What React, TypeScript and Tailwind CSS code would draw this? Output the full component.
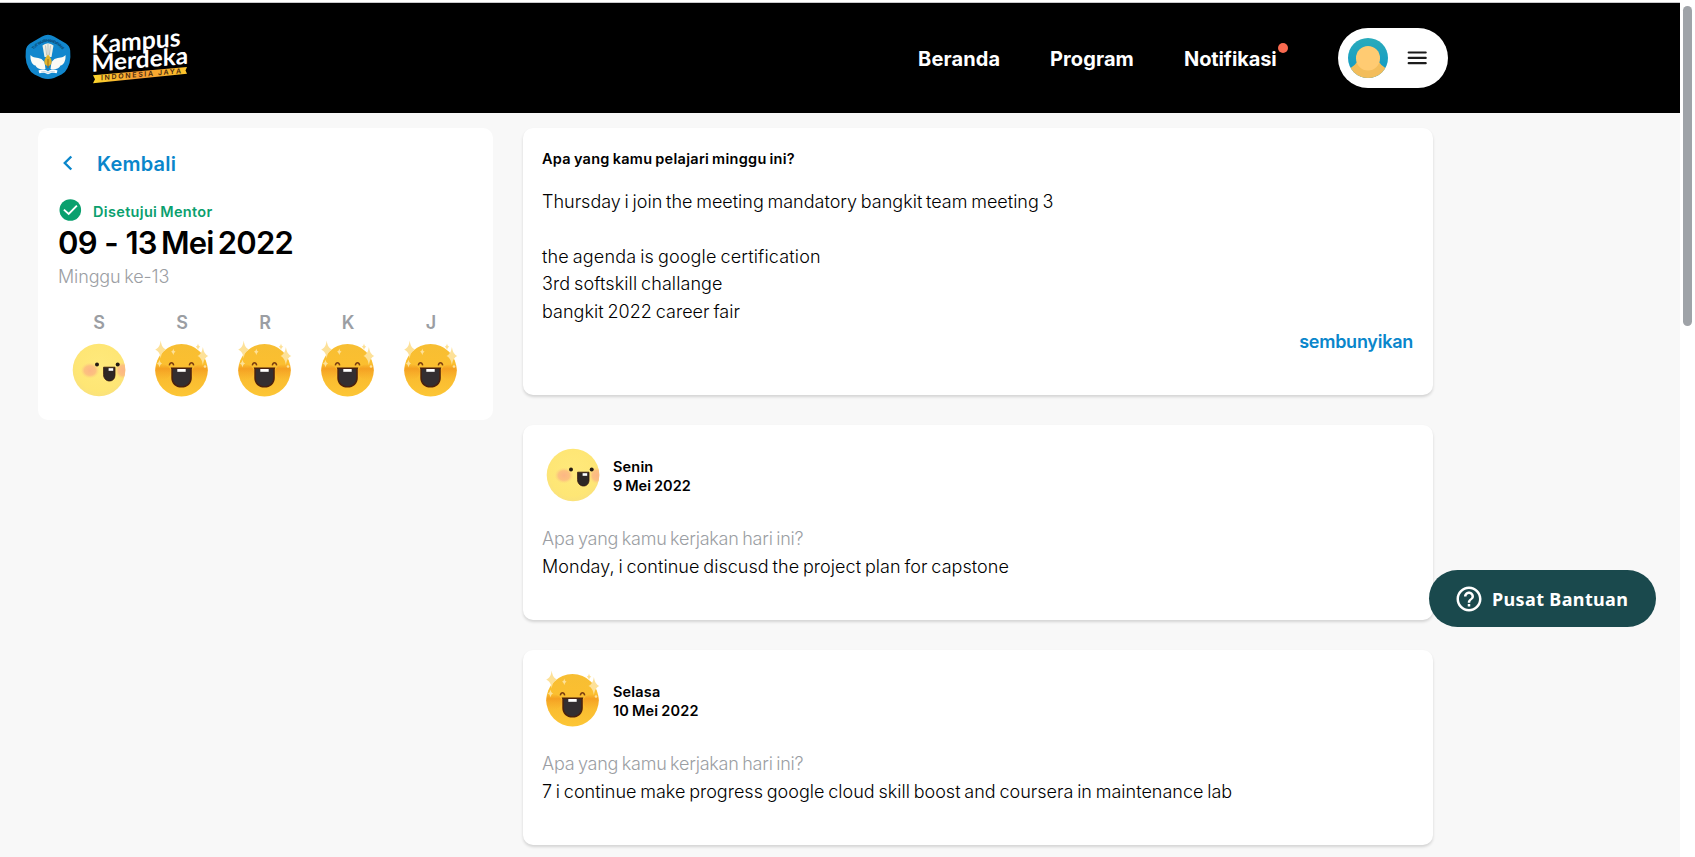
import React from "react";
import { MdHelpOutline } from "react-icons/md";

const DAYS = [
  { label: "S", mood: "calm" },
  { label: "S", mood: "great" },
  { label: "R", mood: "great" },
  { label: "K", mood: "great" },
  { label: "J", mood: "great" },
];

function CalmFace() {
  return (
    <svg viewBox="0 0 60 60" className="block h-[60px] w-[60px]">
      <defs>
        <radialGradient id="calm-skin" cx="50%" cy="45%" r="55%">
          <stop offset="0" stopColor="#ffe97c" />
          <stop offset="0.8" stopColor="#fee675" />
          <stop offset="1" stopColor="#fae27c" />
        </radialGradient>
        <radialGradient id="calm-cheek">
          <stop offset="0" stopColor="#fcb684" />
          <stop offset="0.6" stopColor="#fcbd80" stopOpacity="0.9" />
          <stop offset="1" stopColor="#fdd57c" stopOpacity="0" />
        </radialGradient>
        <clipPath id="calm-clip">
          <circle cx="30" cy="32" r="26.3" />
        </clipPath>
      </defs>
      <circle cx="30" cy="32" r="26.3" fill="url(#calm-skin)" />
      <g clipPath="url(#calm-clip)">
        <ellipse cx="21" cy="32.5" rx="9.5" ry="8" fill="url(#calm-cheek)" />
        <ellipse cx="54" cy="32.5" rx="8" ry="8.5" fill="url(#calm-cheek)" />
      </g>
      <circle cx="28" cy="26.4" r="2" fill="#231a14" />
      <circle cx="48.7" cy="26.4" r="2" fill="#231a14" />
      <path d="M34.6 29.2h11.4v7.8c0 3.6-2.2 6-5.4 6-3.6 0-6-2.7-6-6.3z" fill="#2e2725" stroke="#33150c" strokeWidth="0.8" />
      <rect x="39.6" y="30.2" width="4.6" height="2.6" fill="#fff" />
    </svg>
  );
}

function GreatFace() {
  return (
    <svg viewBox="0 0 60 60" className="block h-[60px] w-[60px]">
      <defs>
        <linearGradient id="great-skin" x1="0" y1="0" x2="0" y2="1">
          <stop offset="0" stopColor="#f7be33" />
          <stop offset="0.38" stopColor="#fbbf30" />
          <stop offset="0.6" stopColor="#fabb2f" />
          <stop offset="1" stopColor="#fcc636" />
        </linearGradient>
        <linearGradient id="great-cheek" x1="0" y1="0" x2="0" y2="1">
          <stop offset="0" stopColor="#f39a1c" stopOpacity="0" />
          <stop offset="0.3" stopColor="#f39a20" stopOpacity="0.85" />
          <stop offset="1" stopColor="#f7a928" stopOpacity="0" />
        </linearGradient>
        <clipPath id="great-clip">
          <circle cx="29.5" cy="32.2" r="26.2" />
        </clipPath>
      </defs>
      <circle cx="29.5" cy="32.2" r="26.2" fill="url(#great-skin)" />
      <g clipPath="url(#great-clip)">
        <ellipse cx="9" cy="34" rx="10" ry="8" fill="url(#great-cheek)" />
        <ellipse cx="50" cy="34" rx="10" ry="8" fill="url(#great-cheek)" />
      </g>
      <path d="M17.3 27.4c.5-2 1.2-2.6 2.2-2.6s1.7.6 2.2 2.6M37.3 27.4c.5-2 1.2-2.6 2.2-2.6s1.7.6 2.2 2.6" fill="none" stroke="#7a3d10" strokeWidth="1.5" />
      <path d="M18.7 29.6h21.6l-.5 1.4v9c0 5.600-4.300 9.600-10.300 9.600s-10.200-4-10.200-9.600v-9z" fill="#4b210d" />
      <path d="M20.800 31h17.400v8.800c0 5-3.700 8.400-8.700 8.400s-8.700-3.400-8.700-8.400z" fill="#332e31" />
      <rect x="25.300" y="31" width="8.400" height="2.800" fill="#fff" />
      <g fill="#fde198">
        <path d="M8.700 2.500c.8 5.600 2.200 7.400 5.500 9-3.300 1.700-4.700 3.700-5.500 9-.8-5.300-2.200-7.300-5.500-9 3.300-1.600 4.700-3.400 5.500-9z" />
        <path d="M50.900 9c.9 5.200 2.300 7.500 5.500 9-3.200 1.500-4.600 3.900-5.500 9-.9-5.100-2.300-7.500-5.500-9 3.200-1.500 4.600-3.800 5.500-9z" />
        <path d="M46 5.500c.4 1.900 1 2.700 2.300 3.300-1.300.6-1.900 1.500-2.300 3.400-.4-1.900-1-2.800-2.300-3.400 1.300-.6 1.900-1.400 2.300-3.300z" />
        <path d="M21.300 10.500c.4 1.900 1 2.700 2.300 3.300-1.300.6-1.900 1.500-2.300 3.400-.4-1.900-1-2.800-2.300-3.400 1.300-.6 1.900-1.400 2.300-3.300z" />
        <path d="M7.500 21.500c.5 2.400 1.200 3.400 2.700 4-1.500.6-2.200 1.600-2.700 4-.5-2.400-1.200-3.400-2.700-4 1.500-.6 2.200-1.600 2.700-4z" />
        <circle cx="53" cy="28.500" r="1.300" />
      </g>
    </svg>
  );
}

function Mood({ mood }: { mood: string }) {
  return mood === "calm" ? <CalmFace /> : <GreatFace />;
}

function MinistryLogo() {
  return (
    <svg viewBox="0 0 46 46" className="block h-[46px] w-[46px] overflow-visible">
      <path d="M23 .8 Q26 .8 29 2.500 L41 9.500 Q44.800 12 45.200 16.500 L45.400 23 Q45.200 29 42.500 34 Q40.500 38.500 36.500 40.500 L29 44 Q23 46 17 44 L9.500 40.500 Q5.500 38.500 3.500 34 Q.8 29 .6 23 L.8 16.500 Q1.200 12 5 9.500 L17 2.500 Q20 .8 23 .8z" fill="#1187cd" />
      <path id="ministry-arc" d="M7.500 17 Q23 -1.500 38.500 17" fill="none" />
      <text fontSize="3.800" fill="#0b4670" className="font-['Inter'] font-bold">
        <textPath href="#ministry-arc" startOffset="50%" textAnchor="middle" textLength="34">TUT WURI HANDAYANI</textPath>
      </text>
      <path d="M17.500 11.500l2.500-1.500 3-.8 3 .8 2.500 1.500-2 11.500h-7z" fill="#eef0e6" />
      <path d="M20.500 11.500l1.200 10M23 10v11M25.500 11.500l-1.200 10" stroke="#8d9697" strokeWidth="0.500" />
      <path d="M5.500 21c2.500 3.500 6.500 2 11 4l3 3 1 7c-5 1-9-.5-10-3.500-3.200-.5-5.500-5-5-10.500zM40.500 21c-2.500 3.500-6.500 2-11 4l-3 3-1 7c5 1 9-.5 10-3.500 3.200-.5 5.500-5 5-10.500z" fill="#fbfbf5" />
      <path d="M23 20.500c2.800 3.400 4.200 5.700 3.500 8.500-.5 2-1.800 3-3.500 3s-3-1-3.500-3c-.7-2.800.7-5.100 3.500-8.500z" fill="#e0b42c" />
      <path d="M23 25v9" stroke="#9a6914" strokeWidth="1" />
      <path d="M13.500 36.500c3.500-1.500 7-1.200 9.500 1 2.500-2.200 6-2.500 9.500-1l-.8 2.800c-3.500-1-6-.8-8.700 1-2.700-1.800-5.200-2-8.700-1z" fill="#fff" />
      <path d="M16 38c3-.8 5-.4 7 1 2-1.400 4-1.800 7-1" fill="none" stroke="#7ca7c2" strokeWidth="0.500" />
    </svg>
  );
}

function KampusLogo() {
  return (
    <svg viewBox="0 0 96 54" className="block h-[54px] w-[96px] overflow-visible">
      <defs>
        <linearGradient id="ribbon" x1="0" x2="1">
          <stop offset="0" stopColor="#fbd52c" />
          <stop offset="0.500" stopColor="#f59a33" />
          <stop offset="1" stopColor="#fdc42a" />
        </linearGradient>
      </defs>
      <g transform="skewY(-4.800)" fill="#fff">
        <text x="-1.500" y="23.500" fontSize="25" textLength="89" lengthAdjust="spacingAndGlyphs" className="font-['Lato'] font-bold">Kampus</text>
        <text x="-1.500" y="41.800" fontSize="23.500" textLength="96.500" lengthAdjust="spacingAndGlyphs" className="font-['Lato'] font-bold">Merdeka</text>
      </g>
      <path d="M0 45.200 94 37l-1.500 3.600 1.500 3.200L0 53.300l2-4z" fill="url(#ribbon)" />
      <g transform="skewY(-5)">
        <text x="8" y="51" fontSize="7" textLength="80" lengthAdjust="spacing" fill="#4a2b10" className="font-['Inter'] font-semibold">INDONESIA JAYA</text>
      </g>
    </svg>
  );
}

function Avatar() {
  return (
    <svg viewBox="0 0 40 40" className="block h-10 w-10">
      <defs>
        <linearGradient id="avatar-bg" x1="0" y1="0" x2="0" y2="1">
          <stop offset="0" stopColor="#2aabbb" />
          <stop offset="1" stopColor="#0f98c6" />
        </linearGradient>
        <clipPath id="avatar-clip">
          <circle cx="20" cy="20" r="20" />
        </clipPath>
      </defs>
      <g clipPath="url(#avatar-clip)">
        <rect width="40" height="40" fill="url(#avatar-bg)" />
        <path d="M1 31c2.500-2 5.500-3 7.500-6.500h23c2 3.500 5 4.500 7.500 6.500v9H1z" fill="#f3bd5b" />
        <rect x="8" y="8" width="24" height="24.500" rx="12" fill="#ffcb72" />
      </g>
    </svg>
  );
}

function Header() {
  return (
    <header className="flex h-[113px] w-[1680px] border-t-2 border-white bg-black">
      <div className="flex w-full border-t border-[#c9c9cc]">
        <div className="ml-[25px] mt-[31px]">
          <MinistryLogo />
        </div>
        <div className="ml-[22px] mt-[27px]">
          <KampusLogo />
        </div>
        <nav className="ml-[729px] mt-[42px] flex whitespace-nowrap text-[20px] font-bold leading-[28px] text-white">
          <a className="w-[132px] tracking-[0.15px]">Beranda</a>
          <a className="w-[134px] tracking-[0.1px]">Program</a>
          <a className="relative w-[93px] tracking-[-0.1px]">
            Notifikasi
            <span className="absolute -top-[2px] left-[94px] h-[10px] w-[10px] rounded-full bg-[#f96a50]" />
          </a>
        </nav>
        <div className="ml-[61px] mt-[25px] flex h-[60px] w-[110px] items-center rounded-full bg-white pl-[10px]">
          <Avatar />
          <svg viewBox="0 0 20 14" className="ml-[19px] h-[14px] w-[20px]" stroke="#1c1c1c" strokeWidth="2.200" strokeLinecap="round">
            <path d="M1.700 1.500h17M1.700 6.900h17M1.700 12.200h17" />
          </svg>
        </div>
      </div>
    </header>
  );
}

function WeekCard() {
  return (
    <aside className="ml-[38px] mt-[15px] flex h-[292px] w-[455px] shrink-0 flex-col rounded-[10px] bg-white pl-5">
      <a className="mt-[21px] flex h-[28px] items-center text-[20px] font-semibold leading-[28px] text-[#0a86cb]">
        <svg viewBox="0 0 10 16" className="ml-[5px] h-4 w-[10px]" fill="none" stroke="currentColor" strokeWidth="2.400">
          <path d="M8.300 1.500 1.800 8l6.500 6.500" />
        </svg>
        <span className="ml-[24px] mt-[2px] tracking-[0.2px]">Kembali</span>
      </a>
      <div className="mt-[21px] flex h-[24px] items-center text-[14.5px] font-semibold text-[#0aa06e]">
        <svg viewBox="0 0 24 24" className="h-6 w-6">
          <circle cx="12.300" cy="12" r="10.800" fill="#0aa06e" />
          <path d="m5.900 11.600 4.800 4.400 8.200-8.300" fill="none" stroke="#fff" strokeWidth="1.900" />
        </svg>
        <span className="ml-[11px] mt-[3px] tracking-[0.33px] [word-spacing:-1px]">Disetujui Mentor</span>
      </div>
      <h1 className="mt-px h-[40px] whitespace-nowrap text-[31px] font-semibold leading-[40px] tracking-[-0.8px] text-black [word-spacing:-2.8px]">
        <span className="[word-spacing:0.6px]">09 - 13</span> Mei 2022
      </h1>
      <p className="text-[18px] font-light leading-[28px] tracking-[-0.12px] text-[#9b9ea3] [word-spacing:-1.3px]">Minggu ke-13</p>
      <div className="-ml-px mt-[18px] flex">
        {DAYS.map((day, i) => (
          <div key={i} className="flex w-[83px] flex-col items-center text-[18px] font-semibold leading-[28px] text-[#9b9ea3]">
            <span className="pl-px">{day.label}</span>
            <div className="mt-px">
              <Mood mood={day.mood} />
            </div>
          </div>
        ))}
      </div>
    </aside>
  );
}

function DayCard({ day, date, mood, children }: { day: string; date: React.ReactNode; mood: string; children: React.ReactNode }) {
  return (
    <article className="h-[195px] rounded-[10px] bg-white pl-[19px] pt-[18px] shadow-[0_2px_3px_rgba(0,0,0,0.15)]">
      <div className="flex h-[64px] pl-px">
        <Mood mood={mood} />
        <div className="ml-[10px] mt-[14px] text-[14.5px] font-semibold leading-[19px] text-black [word-spacing:-1px]">
          <div className="tracking-[0.17px]">{day}</div>
          <div>{date}</div>
        </div>
      </div>
      <p className="mt-[18px] text-[18px] font-light leading-[28px] tracking-[-0.22px] text-[#9b9ea3] [word-spacing:-1.3px]">Apa yang kamu kerjakan hari ini?</p>
      <p className="text-[18px] font-light leading-[28px] text-black [word-spacing:-1.3px]">{children}</p>
    </article>
  );
}

export default function App() {
  return (
    <div className="relative flex h-[857px] w-[1695px] overflow-hidden bg-white font-['Inter',sans-serif]">
      <div className="w-[1680px] shrink-0 bg-[#f8f8f8]">
        <Header />
        <main className="flex">
          <WeekCard />
          <section className="ml-[30px] mt-[15px] flex w-[910px] flex-col gap-[30px]">
            <article className="h-[267px] rounded-[10px] bg-white pl-[19px] pr-5 pt-[21px] shadow-[0_2px_3px_rgba(0,0,0,0.15)]">
              <h2 className="text-[14.5px] font-semibold leading-[20px] tracking-[0.29px] text-black [word-spacing:-1px]">Apa yang kamu pelajari minggu ini?</h2>
              <div className="mt-[18.600px] text-[18px] font-light leading-[27.5px] text-black [word-spacing:-1.3px]">
                <p>Thursday i join the meeting mandatory bangkit team meeting 3</p>
                <br />
                <p className="tracking-[0.16px]">the agenda is google certification</p>
                <p className="tracking-[0.09px]">3rd softskill challange</p>
                <p className="tracking-[0.04px]">bangkit 2022 career fair</p>
              </div>
              <a className="mt-[3.400px] block text-right text-[18px] font-semibold leading-[28px] tracking-[-0.25px] text-[#0a86cb]">sembunyikan</a>
            </article>
            <DayCard day="Senin" date={<span className="tracking-[0.1px]">9 Mei 2022</span>} mood="calm">
              <span className="tracking-[0.055px]">Monday, i continue discusd the project plan for capstone</span>
            </DayCard>
            <DayCard day="Selasa" date={<span className="tracking-[0.2px]">10 Mei 2022</span>} mood="great">
              <span className="tracking-[0.01px]">7 i continue make progress google cloud skill boost and coursera in maintenance lab</span>
            </DayCard>
          </section>
        </main>
      </div>
      <div className="w-[15px] pl-[3px] pt-[6px]">
        <div className="h-[320px] w-[9px] rounded-full bg-[#9fa3a8]" />
      </div>
      <button className="absolute left-[1429px] top-[570px] flex h-[57px] w-[227px] items-center rounded-full bg-[#1a494d] pl-[25px] text-white">
        <MdHelpOutline className="h-[30px] w-[30px]" />
        <span className="ml-[8px] whitespace-nowrap font-['Noto_Sans'] text-[18px] font-bold leading-[26px] tracking-[0.36px]">Pusat Bantuan</span>
      </button>
    </div>
  );
}
